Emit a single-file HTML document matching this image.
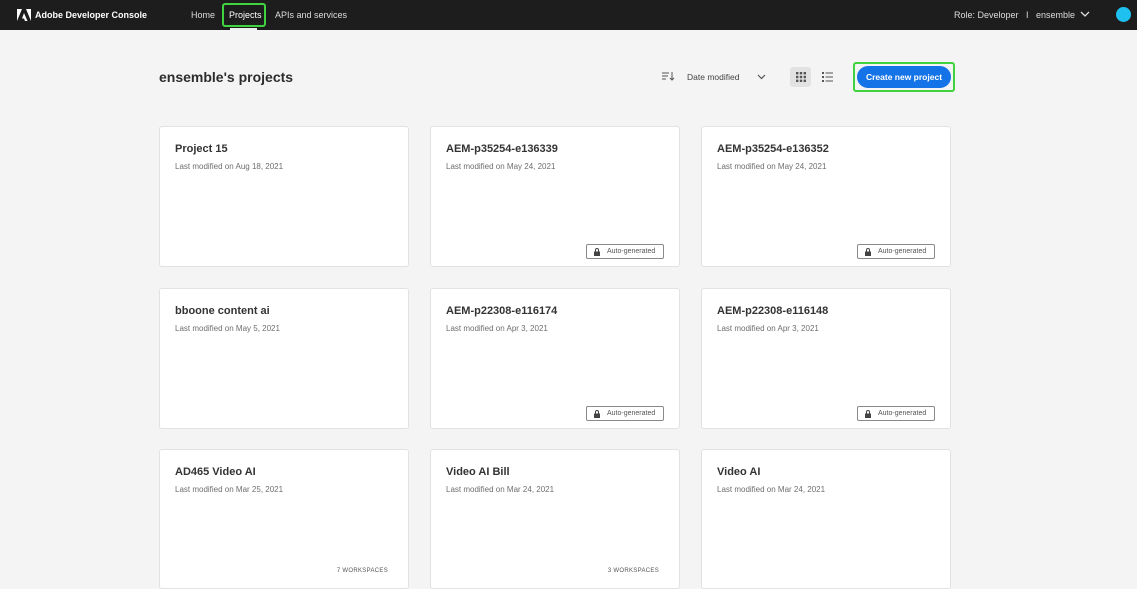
<!DOCTYPE html>
<html><head><style>
*{box-sizing:border-box;margin:0;padding:0}
body{width:1137px;height:580px;overflow:hidden;background:#f4f4f4;font-family:"Liberation Sans",sans-serif;color:#2c2c2c;position:relative}
.hdr{position:absolute;left:0;top:0;width:1137px;height:30px;background:#1d1d1d;color:#ddd;font-size:9px}
.hdr span{position:absolute;top:10px}
.card{position:absolute;width:250px;height:141px;background:#fff;border:1px solid #e2e2e2;border-radius:3px}
.card h3{position:absolute;left:15px;top:16px;font-size:11px;font-weight:bold;color:#333}
.card p{position:absolute;left:15px;top:35px;font-size:8px;color:#6e6e6e}
.badge{position:absolute;right:15px;top:117px;width:78px;height:15px;border:1px solid #8a8a8a;border-radius:2px;font-size:7px;color:#555;padding:3px 0 0 20px}
.badge svg{position:absolute;left:7px;top:3px}
.ws{position:absolute;right:20px;top:118px;font-size:6px;color:#555;letter-spacing:.3px}
</style></head><body>
<div class="hdr">
<svg style="position:absolute;left:17px;top:9px" width="14" height="12" viewBox="0 0 14 12"><path d="M0 0h5L0 12z M9 0h5v12z M7 4l3.5 8H8L7 9.5H5z" fill="#fff"/></svg>
<span style="left:35px;color:#fff;font-weight:bold">Adobe Developer Console</span>
<span style="left:191px">Home</span>
<div style="position:absolute;left:222px;top:3px;width:44px;height:24px;border:2px solid #3fd33f;border-radius:3px"></div>
<span style="left:229px;color:#fff">Projects</span>
<div style="position:absolute;left:230px;top:28px;width:27px;height:2px;background:#eee"></div>
<span style="left:275px">APIs and services</span>
<span style="left:954px">Role: Developer &nbsp; I &nbsp; ensemble</span>
<svg style="position:absolute;left:1080px;top:11px" width="10" height="7"><path d="M1 1l4 4 4-4" stroke="#ddd" fill="none" stroke-width="1.3"/></svg>
<div style="position:absolute;left:1116px;top:7px;width:15px;height:15px;border-radius:50%;background:#1ec0ef"></div>
</div>
<div style="position:absolute;left:159px;top:69px;font-size:14px;font-weight:bold;color:#2c2c2c">ensemble's projects</div>
<svg style="position:absolute;left:662px;top:72px" width="13" height="9"><path d="M0 1h7M0 4h6M0 7h4M10 0v8M8 6l2 2 2-2" stroke="#555" fill="none" stroke-width="1"/></svg>
<div style="position:absolute;left:687px;top:72px;font-size:8.5px;color:#444">Date modified</div>
<svg style="position:absolute;left:757px;top:74px" width="9" height="6"><path d="M1 1l3.5 3.5L8 1" stroke="#555" fill="none" stroke-width="1.2"/></svg>
<div style="position:absolute;left:790px;top:67px;width:21px;height:20px;background:#e2e2e2;border-radius:3px"></div>
<svg style="position:absolute;left:796px;top:72px" width="10" height="10"><g fill="#555"><rect x="0" y="0" width="2.4" height="2.4"/><rect x="3.8" y="0" width="2.4" height="2.4"/><rect x="7.6" y="0" width="2.4" height="2.4"/><rect x="0" y="3.8" width="2.4" height="2.4"/><rect x="3.8" y="3.8" width="2.4" height="2.4"/><rect x="7.6" y="3.8" width="2.4" height="2.4"/><rect x="0" y="7.6" width="2.4" height="2.4"/><rect x="3.8" y="7.6" width="2.4" height="2.4"/><rect x="7.6" y="7.6" width="2.4" height="2.4"/></g></svg>
<svg style="position:absolute;left:822px;top:72px" width="11" height="10"><g fill="#555"><rect x="0" y="0" width="2" height="2"/><rect x="3.5" y="0.5" width="7.5" height="1"/><rect x="0" y="4" width="2" height="2"/><rect x="3.5" y="4.5" width="7.5" height="1"/><rect x="0" y="8" width="2" height="2"/><rect x="3.5" y="8.5" width="7.5" height="1"/></g></svg>
<div style="position:absolute;left:853px;top:62px;width:102px;height:30px;border:2px solid #3fd33f;border-radius:3px"></div>
<div style="position:absolute;left:857px;top:66px;width:94px;height:22px;background:#1473e6;border-radius:11px;color:#fff;font-size:8.5px;font-weight:bold;text-align:center;line-height:22px">Create new project</div>

<div class="card" style="left:159px;top:126px"><h3>Project 15</h3><p>Last modified on Aug 18, 2021</p></div>
<div class="card" style="left:430px;top:126px"><h3>AEM-p35254-e136339</h3><p>Last modified on May 24, 2021</p><div class="badge"><svg width="6" height="8"><path d="M1.5 3.5V2a1.5 1.5 0 0 1 3 0v1.5" stroke="#444" fill="none"/><rect x="0" y="3.5" width="6" height="4.5" fill="#444"/></svg>Auto-generated</div></div>
<div class="card" style="left:701px;top:126px"><h3>AEM-p35254-e136352</h3><p>Last modified on May 24, 2021</p><div class="badge"><svg width="6" height="8"><path d="M1.5 3.5V2a1.5 1.5 0 0 1 3 0v1.5" stroke="#444" fill="none"/><rect x="0" y="3.5" width="6" height="4.5" fill="#444"/></svg>Auto-generated</div></div>
<div class="card" style="left:159px;top:288px"><h3>bboone content ai</h3><p>Last modified on May 5, 2021</p></div>
<div class="card" style="left:430px;top:288px"><h3>AEM-p22308-e116174</h3><p>Last modified on Apr 3, 2021</p><div class="badge"><svg width="6" height="8"><path d="M1.5 3.5V2a1.5 1.5 0 0 1 3 0v1.5" stroke="#444" fill="none"/><rect x="0" y="3.5" width="6" height="4.5" fill="#444"/></svg>Auto-generated</div></div>
<div class="card" style="left:701px;top:288px"><h3>AEM-p22308-e116148</h3><p>Last modified on Apr 3, 2021</p><div class="badge"><svg width="6" height="8"><path d="M1.5 3.5V2a1.5 1.5 0 0 1 3 0v1.5" stroke="#444" fill="none"/><rect x="0" y="3.5" width="6" height="4.5" fill="#444"/></svg>Auto-generated</div></div>
<div class="card" style="left:159px;top:449px;height:140px"><h3>AD465 Video AI</h3><p>Last modified on Mar 25, 2021</p><div class="ws">7 WORKSPACES</div></div>
<div class="card" style="left:430px;top:449px;height:140px"><h3>Video AI Bill</h3><p>Last modified on Mar 24, 2021</p><div class="ws">3 WORKSPACES</div></div>
<div class="card" style="left:701px;top:449px;height:140px"><h3>Video AI</h3><p>Last modified on Mar 24, 2021</p></div>
</body></html>
